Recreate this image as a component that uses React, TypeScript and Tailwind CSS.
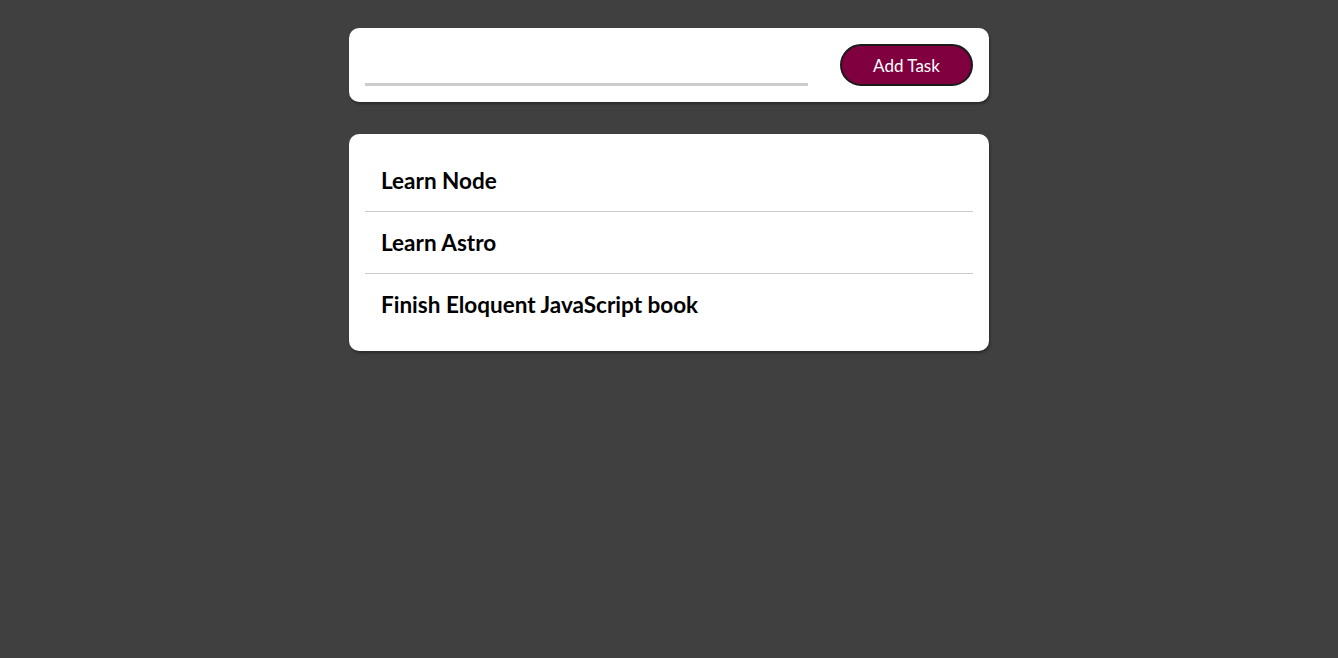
const tasks = ["Learn Node", "Learn Astro", "Finish Eloquent JavaScript book"];

export default function App() {
  return (
    <div className="min-h-screen bg-[#404040] pt-[28px] font-['Lato',sans-serif]">
      <div className="mx-auto w-[640px]">
        {/* ADD TASK FORM */}
        <form
          className="flex items-center justify-between rounded-[10px] bg-white p-4 shadow-[1px_2px_3px_rgba(0,0,0,0.35)]"
          onSubmit={(e) => e.preventDefault()}
        >
          <input
            type="text"
            className="mt-[10px] h-[32px] w-[443px] border-b-[3px] border-[#cccccc] bg-transparent text-lg outline-none"
          />
          <button
            type="submit"
            className="h-[42px] w-[133px] rounded-full border-2 border-[#1a1a1a] bg-[#80003f] pt-[2px] text-[17px] text-white"
          >
            Add Task
          </button>
        </form>

        {/* TASK LIST */}
        <ul className="mt-8 rounded-[10px] bg-white p-4 shadow-[1px_2px_3px_rgba(0,0,0,0.35)]">
          {tasks.map((task, i) => (
            <li
              key={task}
              className={`px-4 py-4 text-[22.5px] font-bold leading-[29px] text-black ${
                i < tasks.length - 1 ? "border-b border-[#cccccc]" : ""
              }`}
            >
              {task}
            </li>
          ))}
        </ul>
      </div>
    </div>
  );
}
